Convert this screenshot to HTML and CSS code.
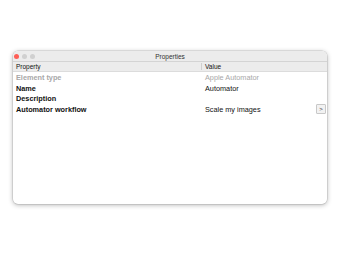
FILE: index.html
```html
<!DOCTYPE html>
<html lang="en">
<head>
  <meta charset="UTF-8" />
  <title>Properties</title>
  <link rel="stylesheet" href="styles.css">
</head>
<body>

<div class="window">
  <div class="titlebar">
    <div class="lights">
      <span class="light red"></span>
      <span class="light"></span>
      <span class="light"></span>
    </div>
    <div class="title">Properties</div>
  </div>

  <div class="table">
    <div class="row head">
      <div class="col-prop">Property</div>
      <div class="col-val">Value</div>
    </div>
    <div class="row muted">
      <div class="col-prop">Element type</div>
      <div class="col-val">Apple Automator</div>
    </div>
    <div class="row">
      <div class="col-prop">Name</div>
      <div class="col-val">Automator</div>
    </div>
    <div class="row">
      <div class="col-prop">Description</div>
      <div class="col-val"></div>
    </div>
    <div class="row">
      <div class="col-prop">Automator workflow</div>
      <div class="col-val">
        <span>Scale my images</span>
        <button class="more">&gt;</button>
      </div>
    </div>
  </div>
</div>

</body>
</html>
```

FILE: styles.css
```css
* {
  box-sizing: border-box;
  margin: 0;
  padding: 0;
}

body {
  font-family: 'Liberation Sans', Arial, sans-serif;
  background: #fff;
  width: 340px;
  height: 260px;
  padding: 51px 13px 0 13px;
  font-size: 7.3px;
  color: #111;
}

.window {
  width: 314px;
  height: 153px;
  background: #fff;
  border-radius: 5px;
  box-shadow: 0 1px 5px rgba(0,0,0,0.3), 0 0 0 0.5px rgba(0,0,0,0.15);
  overflow: hidden;
}

.titlebar {
  height: 11px;
  background: #ececec;
  border-bottom: 1px solid #d4d4d4;
  position: relative;
  display: flex;
  align-items: center;
  justify-content: center;
}

.lights {
  position: absolute;
  left: 1px;
  top: 2.5px;
  display: flex;
  gap: 3px;
}

.light {
  width: 5px;
  height: 5px;
  border-radius: 50%;
  background: #d0d0d0;
}

.light.red {
  background: #fe5f57;
}

.title {
  font-size: 6.5px;
  color: #333;
}

.row {
  display: flex;
  height: 10.7px;
  align-items: center;
}

.row .col-prop {
  width: 189px;
  padding-left: 3px;
  font-weight: bold;
}

.row .col-val {
  flex: 1;
  padding-left: 3px;
  display: flex;
  align-items: center;
  justify-content: space-between;
  padding-right: 1px;
}

.row.head {
  background: #ececec;
  border-bottom: 1px solid #dcdcdc;
  height: 10px;
  font-size: 6.5px;
}

.row.head .col-prop {
  font-weight: normal;
  border-right: 1px solid #cfcfcf;
}

.row.muted {
  color: #a8a8a8;
}

.more {
  width: 10px;
  height: 10px;
  font-family: 'Liberation Sans', Arial, sans-serif;
  font-size: 6px;
  background: #f2f2f2;
  border: 1px solid #c8c8c8;
  border-radius: 1px;
  color: #333;
}
```
